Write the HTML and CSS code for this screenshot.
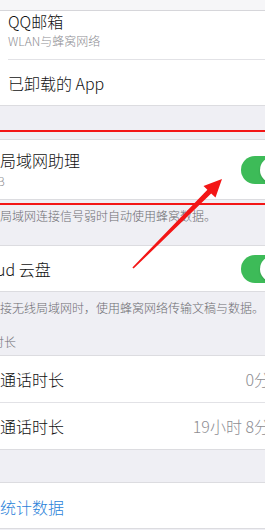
FILE: index.html
```html
<!DOCTYPE html>
<html lang="zh-CN">
<head>
<meta charset="utf-8">
<title>蜂窝网络</title>
<link rel="stylesheet" href="styles.css">
</head>
<body>
<div class="screen">
  <div class="top-strip"></div>
  <div class="group">
    <div class="row row-sub inset">
      <div class="title">QQ邮箱</div>
      <div class="sub">WLAN与蜂窝网络</div>
    </div>
    <div class="row row-plain pad8">
      <div class="title">已卸载的 App</div>
    </div>
  </div>
  <div class="gap g1"></div>
  <div class="group">
    <div class="row row-sub2">
      <div class="textcol">
        <div class="title">局域网助理</div>
        <div class="sub cutB">B</div>
      </div>
      <div class="toggle"><span class="knob"></span></div>
    </div>
  </div>
  <div class="footnote f1">局域网连接信号弱时自动使用蜂窝数据。</div>
  <div class="group">
    <div class="row row-plain">
      <div class="title cut-ud">ud 云盘</div>
      <div class="toggle"><span class="knob"></span></div>
    </div>
  </div>
  <div class="footnote f2">接无线局域网时，使用蜂窝网络传输文稿与数据。</div>
  <div class="header">时长</div>
  <div class="group">
    <div class="row row-val sep">
      <div class="title">通话时长</div>
      <div class="value">0分钟</div>
    </div>
    <div class="row row-val">
      <div class="title">通话时长</div>
      <div class="value">19小时 8分钟</div>
    </div>
  </div>
  <div class="gap g2"></div>
  <div class="group">
    <div class="row row-link">
      <div class="title link">统计数据</div>
    </div>
  </div>
  <div class="gap g3"></div>
</div>
<svg class="overlay" width="265" height="530" viewBox="0 0 265 530">
  <rect x="0" y="130" width="265" height="2" fill="#f31616"/>
  <rect x="0" y="203" width="265" height="2" fill="#f31616"/>
  <polygon fill="#f31616" points="222,179 215.5,197.5 211.2,193.6 133.6,268.6 132.4,267.4 207.4,189.8 203.5,186"/>
</svg>
</body>
</html>
```

FILE: styles.css
```css
html, body {
  margin: 0;
  padding: 0;
}
body {
  width: 265px;
  height: 530px;
  overflow: hidden;
  background: #efeff4;
  position: relative;
  font-family: "Noto Sans CJK SC", "Noto Sans", sans-serif;
  font-weight: 300;
  color: #111;
}
.screen {
  width: 300px;
}
.top-strip {
  height: 10px;
  background: #f6f6f8;
  border-bottom: 1px solid #d6d6da;
}
.group {
  background: #fff;
  border-top: 1px solid #dcdce0;
  border-bottom: 1px solid #dcdce0;
}
.top-strip + .group {
  border-top: none;
}
.row {
  display: flex;
  align-items: center;
  padding-right: 14px;
}
.title {
  font-size: 16px;
  line-height: 20px;
  white-space: nowrap;
}
.sub {
  font-size: 12px;
  line-height: 16px;
  color: #8e8e93;
  white-space: nowrap;
}
.row-sub {
  flex-direction: column;
  align-items: flex-start;
  padding: 0 0 10px 0;
  margin-left: 8px;
  border-bottom: 1px solid #e2e2e6;
}
.row-sub .sub {
  margin-top: 2px;
}
.pad8 {
  padding-left: 8px;
}
.row-plain {
  height: 45px;
}
.row-sub2 {
  height: 59px;
  justify-content: space-between;
  padding-right: 12px;
}
.textcol {
  display: flex;
  flex-direction: column;
}
.textcol .sub {
  margin-top: 3px;
}
.cutB {
  margin-left: -3px;
}
.row-plain .toggle {
  margin-left: auto;
  margin-right: -2px;
}
.cut-ud {
  margin-left: -4px;
}
.toggle {
  width: 47px;
  height: 28px;
  border-radius: 14px;
  background: #3dbb58;
  position: relative;
  flex: none;
}
.knob {
  position: absolute;
  right: 2px;
  top: 1px;
  width: 26px;
  height: 26px;
  border-radius: 50%;
  background: #fff;
  box-shadow: 0 1px 2px rgba(0,0,0,0.2);
}
.footnote {
  font-size: 12px;
  line-height: 16px;
  color: #6d6d72;
  white-space: nowrap;
}
.f1 {
  padding: 8px 0 21px 0;
}
.f2 {
  padding: 8px 0 0 0;
}
.header {
  font-size: 12px;
  line-height: 16px;
  color: #6d6d72;
  margin: 18px 0 0 -8px;
  padding-bottom: 5px;
}
.row-val {
  height: 46px;
  justify-content: space-between;
}
.sep {
  height: 46px;
  border-bottom: 1px solid #e2e2e6;
}
.value {
  font-size: 16px;
  line-height: 20px;
  color: #8e8e93;
  white-space: nowrap;
}
.gap {
  background: #efeff4;
}
.g1 {
  height: 33px;
}
.g2 {
  height: 32px;
}
.g3 {
  height: 20px;
}
.row-link {
  height: 45px;
  align-items: flex-start;
  padding-top: 14px;
  box-sizing: border-box;
}
.link {
  color: #2a7fd9;
}
.overlay {
  position: absolute;
  left: 0;
  top: 0;
  pointer-events: none;
}
```
